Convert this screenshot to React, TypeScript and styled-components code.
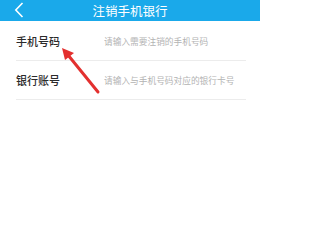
import styled, { createGlobalStyle } from "styled-components";

const GlobalStyle = createGlobalStyle`
  html, body {
    margin: 0;
    padding: 0;
    background: #ffffff;
  }
  body {
    font-family: "Noto Sans CJK SC", "Noto Sans", sans-serif;
  }
`;

const fields = [
  { label: "手机号码", placeholder: "请输入需要注销的手机号码" },
  { label: "银行账号", placeholder: "请输入与手机号码对应的银行卡号" },
];

export default function App() {
  return (
    <Page>
      <GlobalStyle />
      <Header>
        <BackButton aria-label="返回">
          <svg width="10" height="16" viewBox="0 0 10 16">
            <path d="M8.5 1 L1.8 8 L8.5 15" fill="none" stroke="#fff" strokeWidth="1.6" />
          </svg>
        </BackButton>
        <Title>注销手机银行</Title>
      </Header>
      <Form>
        {fields.map((f) => (
          <FieldRow key={f.label}>
            <Label>{f.label}</Label>
            <Input placeholder={f.placeholder} />
          </FieldRow>
        ))}
      </Form>
      <Arrow width="260" height="251" viewBox="0 0 260 251">
        <line x1="98" y1="92" x2="68" y2="55" stroke="#e3302f" strokeWidth="3" strokeLinecap="round" />
        <polygon points="62,48 74,53 65,60" fill="#e3302f" />
      </Arrow>
    </Page>
  );
}

const Page = styled.div`
  position: relative;
  width: 260px;
  height: 251px;
  background: #fff;
  overflow: hidden;
`;

const Header = styled.header`
  position: relative;
  height: 21px;
  background: #1aa9ea;
  display: flex;
  align-items: center;
  justify-content: center;
`;

const BackButton = styled.button`
  position: absolute;
  left: 14px;
  top: 2px;
  padding: 0;
  border: none;
  background: none;
  display: flex;
`;

const Title = styled.h1`
  margin: 0;
  color: #fff;
  font-size: 12.5px;
  font-weight: 400;
  line-height: 21px;
`;

const Form = styled.div`
  display: flex;
  flex-direction: column;
`;

const FieldRow = styled.div`
  display: flex;
  align-items: center;
  height: 38px;
  margin: 0 14px 0 16px;
  border-bottom: 1px solid #ececec;
  &:first-child {
    padding-top: 1px;
  }
`;

const Label = styled.span`
  width: 88px;
  flex: none;
  font-size: 11px;
  font-weight: 500;
  color: #2b2b2b;
`;

const Input = styled.input`
  flex: 1;
  min-width: 0;
  border: none;
  outline: none;
  padding: 0;
  background: transparent;
  font-family: "Noto Sans CJK SC", "Noto Sans", sans-serif;
  font-size: 8.7px;
  color: #333;
  &::placeholder {
    color: #b3b3b3;
  }
`;

const Arrow = styled.svg`
  position: absolute;
  left: 0;
  top: 0;
  pointer-events: none;
`;
